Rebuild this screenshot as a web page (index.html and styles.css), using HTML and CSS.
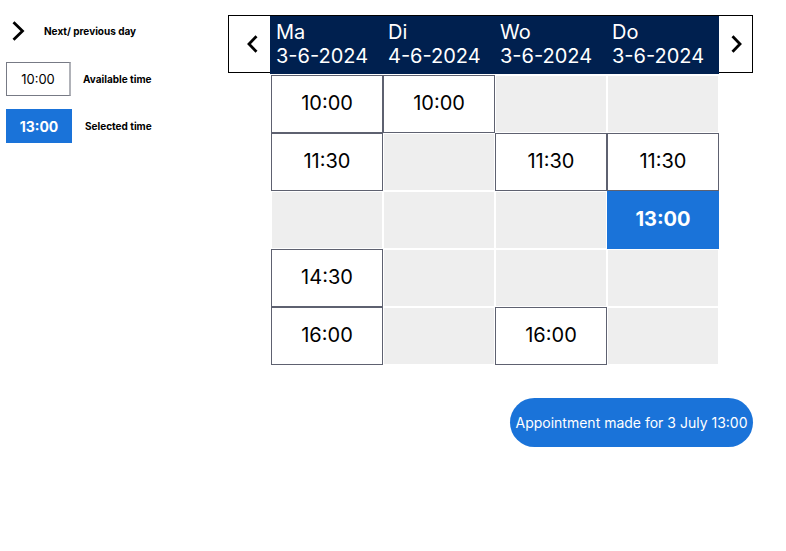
FILE: index.html
```html
<!DOCTYPE html>
<html>
<head>
<meta charset="utf-8">
<link rel="stylesheet" href="styles.css">
</head>
<body>
<div class="page">
  <aside class="legend">
    <div class="legend-row row-nav">
      <svg class="legend-chev" width="14" height="20" viewBox="0 0 14 20"><path d="M2.5 1.2 L11.5 10 L2.5 18.8" fill="none" stroke="#000" stroke-width="2.8"/></svg>
      <span class="legend-label label-nav">Next/ previous day</span>
    </div>
    <div class="legend-row row-avail">
      <div class="legend-box box-avail">10:00</div>
      <span class="legend-label">Available time</span>
    </div>
    <div class="legend-row row-sel">
      <div class="legend-box box-sel">13:00</div>
      <span class="legend-label label-sel">Selected time</span>
    </div>
  </aside>
  <main class="main">
    <div class="days-bar">
      <button class="nav-btn nav-prev" aria-label="previous">
        <svg width="13" height="18" viewBox="0 0 13 18"><path d="M10.5 1.3 L3 9 L10.5 16.7" fill="none" stroke="#000" stroke-width="2.8"/></svg>
      </button>
      <div class="days">
        <div class="day"><span>Ma</span><span>3-6-2024</span></div>
        <div class="day"><span>Di</span><span>4-6-2024</span></div>
        <div class="day"><span>Wo</span><span>3-6-2024</span></div>
        <div class="day"><span>Do</span><span>3-6-2024</span></div>
      </div>
      <button class="nav-btn nav-next" aria-label="next">
        <svg width="13" height="18" viewBox="0 0 13 18"><path d="M2.5 1.3 L10 9 L2.5 16.7" fill="none" stroke="#000" stroke-width="2.8"/></svg>
      </button>
    </div>
    <div class="slots">
      <div class="slot free">10:00</div>
      <div class="slot free">10:00</div>
      <div class="slot empty"></div>
      <div class="slot empty"></div>

      <div class="slot free">11:30</div>
      <div class="slot empty"></div>
      <div class="slot free">11:30</div>
      <div class="slot free">11:30</div>

      <div class="slot empty"></div>
      <div class="slot empty"></div>
      <div class="slot empty"></div>
      <div class="slot selected">13:00</div>

      <div class="slot free">14:30</div>
      <div class="slot empty"></div>
      <div class="slot empty"></div>
      <div class="slot empty"></div>

      <div class="slot free">16:00</div>
      <div class="slot empty"></div>
      <div class="slot free">16:00</div>
      <div class="slot empty"></div>
    </div>
    <button class="confirm">Appointment made for 3 July 13:00</button>
  </main>
</div>
</body>
</html>
```

FILE: styles.css
```css
* { box-sizing: border-box; }
html, body { margin: 0; padding: 0; background: #fff; }
body { font-family: Inter, "Noto Sans", "Liberation Sans", sans-serif; color: #000; }

.page {
  display: flex;
  padding: 15px 0 0 6px;
}

.legend {
  width: 222px;
  display: flex;
  flex-direction: column;
}
.legend-row {
  display: flex;
  align-items: center;
}
.row-nav { height: 32px; }
.legend-chev { margin-left: 5px; margin-right: 19px; }
.legend-label {
  font-size: 10px;
  font-weight: 700;
  margin-left: 12px;
}
.label-nav { margin-left: 0; }
.row-avail { margin-top: 15px; }
.row-sel { margin-top: 13px; }
.label-sel { margin-left: 13px; }
.legend-box {
  display: flex;
  align-items: center;
  justify-content: center;
}
.box-avail {
  width: 65px;
  height: 34px;
  border: 1px solid #777a85;
  border-right: 2px solid #b0b2b8;
  font-size: 13px;
}
.box-sel {
  width: 66px;
  height: 34px;
  background: #1a73d9;
  color: #fff;
  font-size: 14px;
  font-weight: 700;
}

.main {
  display: flex;
  flex-direction: column;
  width: 525px;
}

.days-bar {
  height: 58px;
  border: 1px solid #000;
  display: flex;
  align-items: flex-start;
}
.nav-btn {
  border: 0;
  background: none;
  padding: 0;
  height: 56px;
  display: flex;
  align-items: center;
  justify-content: center;
  cursor: pointer;
}
.nav-prev { width: 41px; padding-left: 6px; }
.nav-next { width: 33px; padding-left: 2px; }

.days {
  display: flex;
  background: #00204f;
  height: 58px;
  width: 449px;
  margin-bottom: -2px;
}
.day {
  width: 112px;
  display: flex;
  flex-direction: column;
  padding: 4px 0 0 6px;
  color: #fff;
  font-size: 20px;
  line-height: 24px;
}

.slots {
  display: grid;
  grid-template-columns: repeat(4, 112px);
  grid-auto-rows: 58px;
  margin-left: 43px;
  margin-top: 2px;
}
.slot {
  display: flex;
  align-items: center;
  justify-content: center;
  font-size: 20px;
  padding-bottom: 2px;
  border: 1px solid #fff;
}
.slot.free {
  background: #fff;
  border-color: #5e6170;
}
.slot.empty { background: #eeeeee; }
.slot.selected {
  background: #1a73d9;
  border-color: #1a73d9;
  color: #fff;
  font-weight: 700;
}

.confirm {
  align-self: flex-end;
  margin-top: 33px;
  width: 243px;
  height: 49px;
  border: 0;
  border-radius: 25px;
  background: #1a73d9;
  color: #fff;
  font-family: Inter, "Noto Sans", "Liberation Sans", sans-serif;
  font-size: 14px;
  padding: 0;
  cursor: pointer;
}
```
